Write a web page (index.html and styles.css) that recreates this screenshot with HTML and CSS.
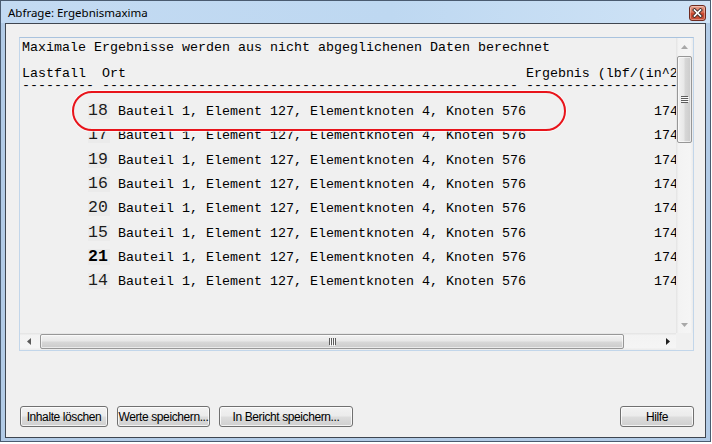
FILE: index.html
```html
<!DOCTYPE html>
<html lang="de">
<head>
<meta charset="utf-8">
<title>Abfrage: Ergebnismaxima</title>
<link rel="stylesheet" href="styles.css">
</head>
<body>
<div class="window">
  <div class="titlebar">
    <span class="title">Abfrage: Ergebnismaxima</span>
    <span class="close"><svg width="11" height="10" viewBox="0 0 11 10"><path d="M2.5 2 L8.5 8 M8.5 2 L2.5 8" stroke="#3b2a28" stroke-width="3.4" stroke-linecap="square"/><path d="M2.5 2 L8.5 8 M8.5 2 L2.5 8" stroke="#ffffff" stroke-width="1.7" stroke-linecap="square"/></svg></span>
  </div>
  <div class="frame">
    <div class="client">
      <div class="output">
        <div class="viewport">
          <div class="line l1">Maximale Ergebnisse werden aus nicht abgeglichenen Daten berechnet</div>
          <div class="line l2">Lastfall  Ort                                                  Ergebnis (lbf/(in^2))</div>
          <div class="line l3">--------- ---------------------------------------------------- ------------------------------</div>
          <div class="rows">
            <div class="row top"><span class="num">18</span><span class="loc">Bauteil 1, Element 127, Elementknoten 4, Knoten 576</span><span class="val">174.382</span></div>
            <div class="row"><span class="num">17</span><span class="loc">Bauteil 1, Element 127, Elementknoten 4, Knoten 576</span><span class="val">174.382</span></div>
            <div class="row"><span class="num">19</span><span class="loc">Bauteil 1, Element 127, Elementknoten 4, Knoten 576</span><span class="val">174.382</span></div>
            <div class="row"><span class="num">16</span><span class="loc">Bauteil 1, Element 127, Elementknoten 4, Knoten 576</span><span class="val">174.382</span></div>
            <div class="row"><span class="num">20</span><span class="loc">Bauteil 1, Element 127, Elementknoten 4, Knoten 576</span><span class="val">174.382</span></div>
            <div class="row"><span class="num">15</span><span class="loc">Bauteil 1, Element 127, Elementknoten 4, Knoten 576</span><span class="val">174.382</span></div>
            <div class="row"><span class="num bold">21</span><span class="loc">Bauteil 1, Element 127, Elementknoten 4, Knoten 576</span><span class="val">174.382</span></div>
            <div class="row"><span class="num">14</span><span class="loc">Bauteil 1, Element 127, Elementknoten 4, Knoten 576</span><span class="val">174.382</span></div>
          </div>
          <div class="mark"></div>
        </div>
        <div class="vscroll">
          <div class="sbtn"><svg width="7" height="4" viewBox="0 0 7 4"><path d="M0 4 L3.5 0 L7 4 Z" fill="#a8a8a8"/></svg></div>
          <div class="vthumb"><svg width="8" height="7" viewBox="0 0 8 7"><path d="M0 0.5 H7 M0 2.5 H7 M0 4.5 H7 M0 6.5 H7" stroke="#5c5c5c" stroke-width="1"/><path d="M1 1.5 H8 M1 3.5 H8 M1 5.5 H8" stroke="#fafafa" stroke-width="1"/></svg></div>
          <div class="track"></div>
          <div class="sbtn"><svg width="7" height="4" viewBox="0 0 7 4"><path d="M0 0 L3.5 4 L7 0 Z" fill="#a8a8a8"/></svg></div>
        </div>
        <div class="hscroll">
          <div class="sbtn"><svg width="4" height="7" viewBox="0 0 4 7"><path d="M4 0 L0 3.5 L4 7 Z" fill="#5a5a5a"/></svg></div>
          <div class="hthumb"><svg width="7" height="8" viewBox="0 0 7 8"><path d="M0.5 0 V7 M2.5 0 V7 M4.5 0 V7 M6.5 0 V7" stroke="#5c5c5c" stroke-width="1"/><path d="M1.5 1 V8 M3.5 1 V8 M5.5 1 V8" stroke="#fafafa" stroke-width="1"/></svg></div>
          <div class="track"></div>
          <div class="sbtn"><svg width="4" height="7" viewBox="0 0 4 7"><path d="M0 0 L4 3.5 L0 7 Z" fill="#202020"/></svg></div>
        </div>
        <div class="corner"></div>
      </div>
      <div class="buttons">
        <button class="btn w88">Inhalte löschen</button>
        <button class="btn w93">Werte speichern...</button>
        <button class="btn w134">In Bericht speichern...</button>
        <button class="btn w74 help">Hilfe</button>
      </div>
    </div>
  </div>
</div>
</body>
</html>
```
FILE: styles.css
```css
* { box-sizing: border-box; }
html, body { margin: 0; padding: 0; background: #ffffff; }
body { width: 712px; height: 444px; overflow: hidden; }

.window {
  width: 711px;
  height: 442px;
  border: 1px solid #4a5b70;
  background: #b2cbe6;
  display: flex;
  flex-direction: column;
}

.titlebar {
  height: 22px;
  flex: none;
  display: flex;
  align-items: flex-start;
  justify-content: space-between;
  padding: 0 4px 0 7px;
  background: linear-gradient(to right, #c3daf2 0%, #bed8f1 55%, #cfe3f6 100%);
}
.title {
  font-family: "Noto Sans", "Liberation Sans", sans-serif;
  font-size: 11.5px;
  line-height: 16px;
  padding-top: 4px;
  color: #000;
}
.close {
  margin-top: 4px;
  width: 17px;
  height: 16px;
  border: 1px solid #6e2a1f;
  border-radius: 3px;
  background: linear-gradient(#e6a28f 0%, #d86d55 45%, #c7442b 55%, #c9523a 100%);
  box-shadow: inset 0 0 0 1px rgba(255,255,255,0.35);
  display: flex;
  align-items: center;
  justify-content: center;
}

.frame {
  flex: 1;
  display: flex;
  padding: 0 4px 3px 4px;
}
.client {
  flex: 1;
  border: 1px solid #3f4650;
  background: #f0f0f0;
  padding: 13px 11px 10px 13px;
  display: flex;
  flex-direction: column;
}

.output {
  height: 314px;
  flex: none;
  border: 1px solid #c2d6ea;
  border-top-color: #a9c3de;
  display: grid;
  grid-template-columns: 1fr 17px;
  grid-template-rows: 1fr 17px;
  background: #f0f0f0;
}

.viewport {
  grid-column: 1;
  grid-row: 1;
  position: relative;
  overflow: hidden;
  padding: 2px 0 0 2px;
  font-family: "Liberation Mono", "Courier New", monospace;
  font-size: 13.333px;
  color: #000;
}
.line { white-space: pre; }
.l1 { height: 16px; line-height: 16px; }
.l2 { margin-top: 12px; height: 12px; line-height: 12px; }
.l3 { height: 12px; line-height: 12px; }
.rows { margin-top: 8px; }
.row {
  display: flex;
  align-items: baseline;
  height: 24.35px;
  line-height: 24px;
  padding-left: 66px;
  white-space: pre;
}
.row.top { position: relative; z-index: 2; }
.num {
  width: 30px;
  flex: none;
  font-size: 16.5px;
  line-height: 16px;
  color: #1c1c1c;
  background: linear-gradient(#ebebeb, #ebebeb) no-repeat 0 50% / 22px 19px;
}
.num.bold { font-weight: bold; color: #000; }
.loc { width: 536px; flex: none; }
.val { flex: none; }

.mark {
  position: absolute;
  left: 52px;
  top: 53px;
  width: 494px;
  height: 40px;
  border: 2px solid #e8141b;
  border-radius: 20px;
  background: #f0f0f0;
  box-shadow: 0 0 0 1px rgba(255,255,255,0.7);
  z-index: 1;
}

.vscroll {
  grid-column: 2;
  grid-row: 1;
  display: flex;
  flex-direction: column;
  background: linear-gradient(to right, #e3e3e3 0%, #f3f3f3 15%, #f5f5f5 85%, #ebebeb 100%);
}
.hscroll {
  grid-column: 1;
  grid-row: 2;
  display: flex;
  background: linear-gradient(#e3e3e3 0%, #f3f3f3 15%, #f5f5f5 85%, #ebebeb 100%);
}
.sbtn {
  width: 17px;
  height: 17px;
  flex: none;
  display: flex;
  align-items: center;
  justify-content: center;
}
.track { flex: 1; }
.vthumb {
  flex: none;
  margin: 1px 1px 0 1px;
  height: 87px;
  border: 1px solid #979797;
  border-radius: 2px;
  background: linear-gradient(to right, #f2f2f2 0%, #e7e7e7 48%, #d8d8d8 52%, #cbcbcb 100%);
  box-shadow: inset 0 0 0 1px rgba(255,255,255,0.6);
  display: flex;
  align-items: center;
  justify-content: center;
}
.hthumb {
  flex: none;
  margin: 1px 0 1px 3px;
  width: 584px;
  border: 1px solid #979797;
  border-radius: 2px;
  background: linear-gradient(#f2f2f2 0%, #e7e7e7 48%, #d8d8d8 52%, #cbcbcb 100%);
  box-shadow: inset 0 0 0 1px rgba(255,255,255,0.6);
  display: flex;
  align-items: center;
  justify-content: center;
}
.corner {
  grid-column: 2;
  grid-row: 2;
  background: #f0f0f0;
}

.buttons {
  margin-top: auto;
  display: flex;
  gap: 9px;
  padding-left: 1px;
}
.btn {
  height: 21px;
  margin: 0;
  padding: 1px 0 0 0;
  border: 1px solid #707070;
  border-radius: 3px;
  background: linear-gradient(#f2f2f2 0%, #ebebeb 48%, #dddddd 52%, #cfcfcf 100%);
  box-shadow: inset 0 0 0 1px rgba(255,255,255,0.75);
  font-family: "Liberation Sans", Arial, sans-serif;
  font-size: 12px;
  letter-spacing: -0.4px;
  color: #000;
  display: flex;
  align-items: center;
  justify-content: center;
  white-space: nowrap;
}
.w88 { width: 88px; }
.w93 { width: 93px; }
.w134 { width: 134px; }
.w74 { width: 74px; }
.help { margin-left: auto; }
```
